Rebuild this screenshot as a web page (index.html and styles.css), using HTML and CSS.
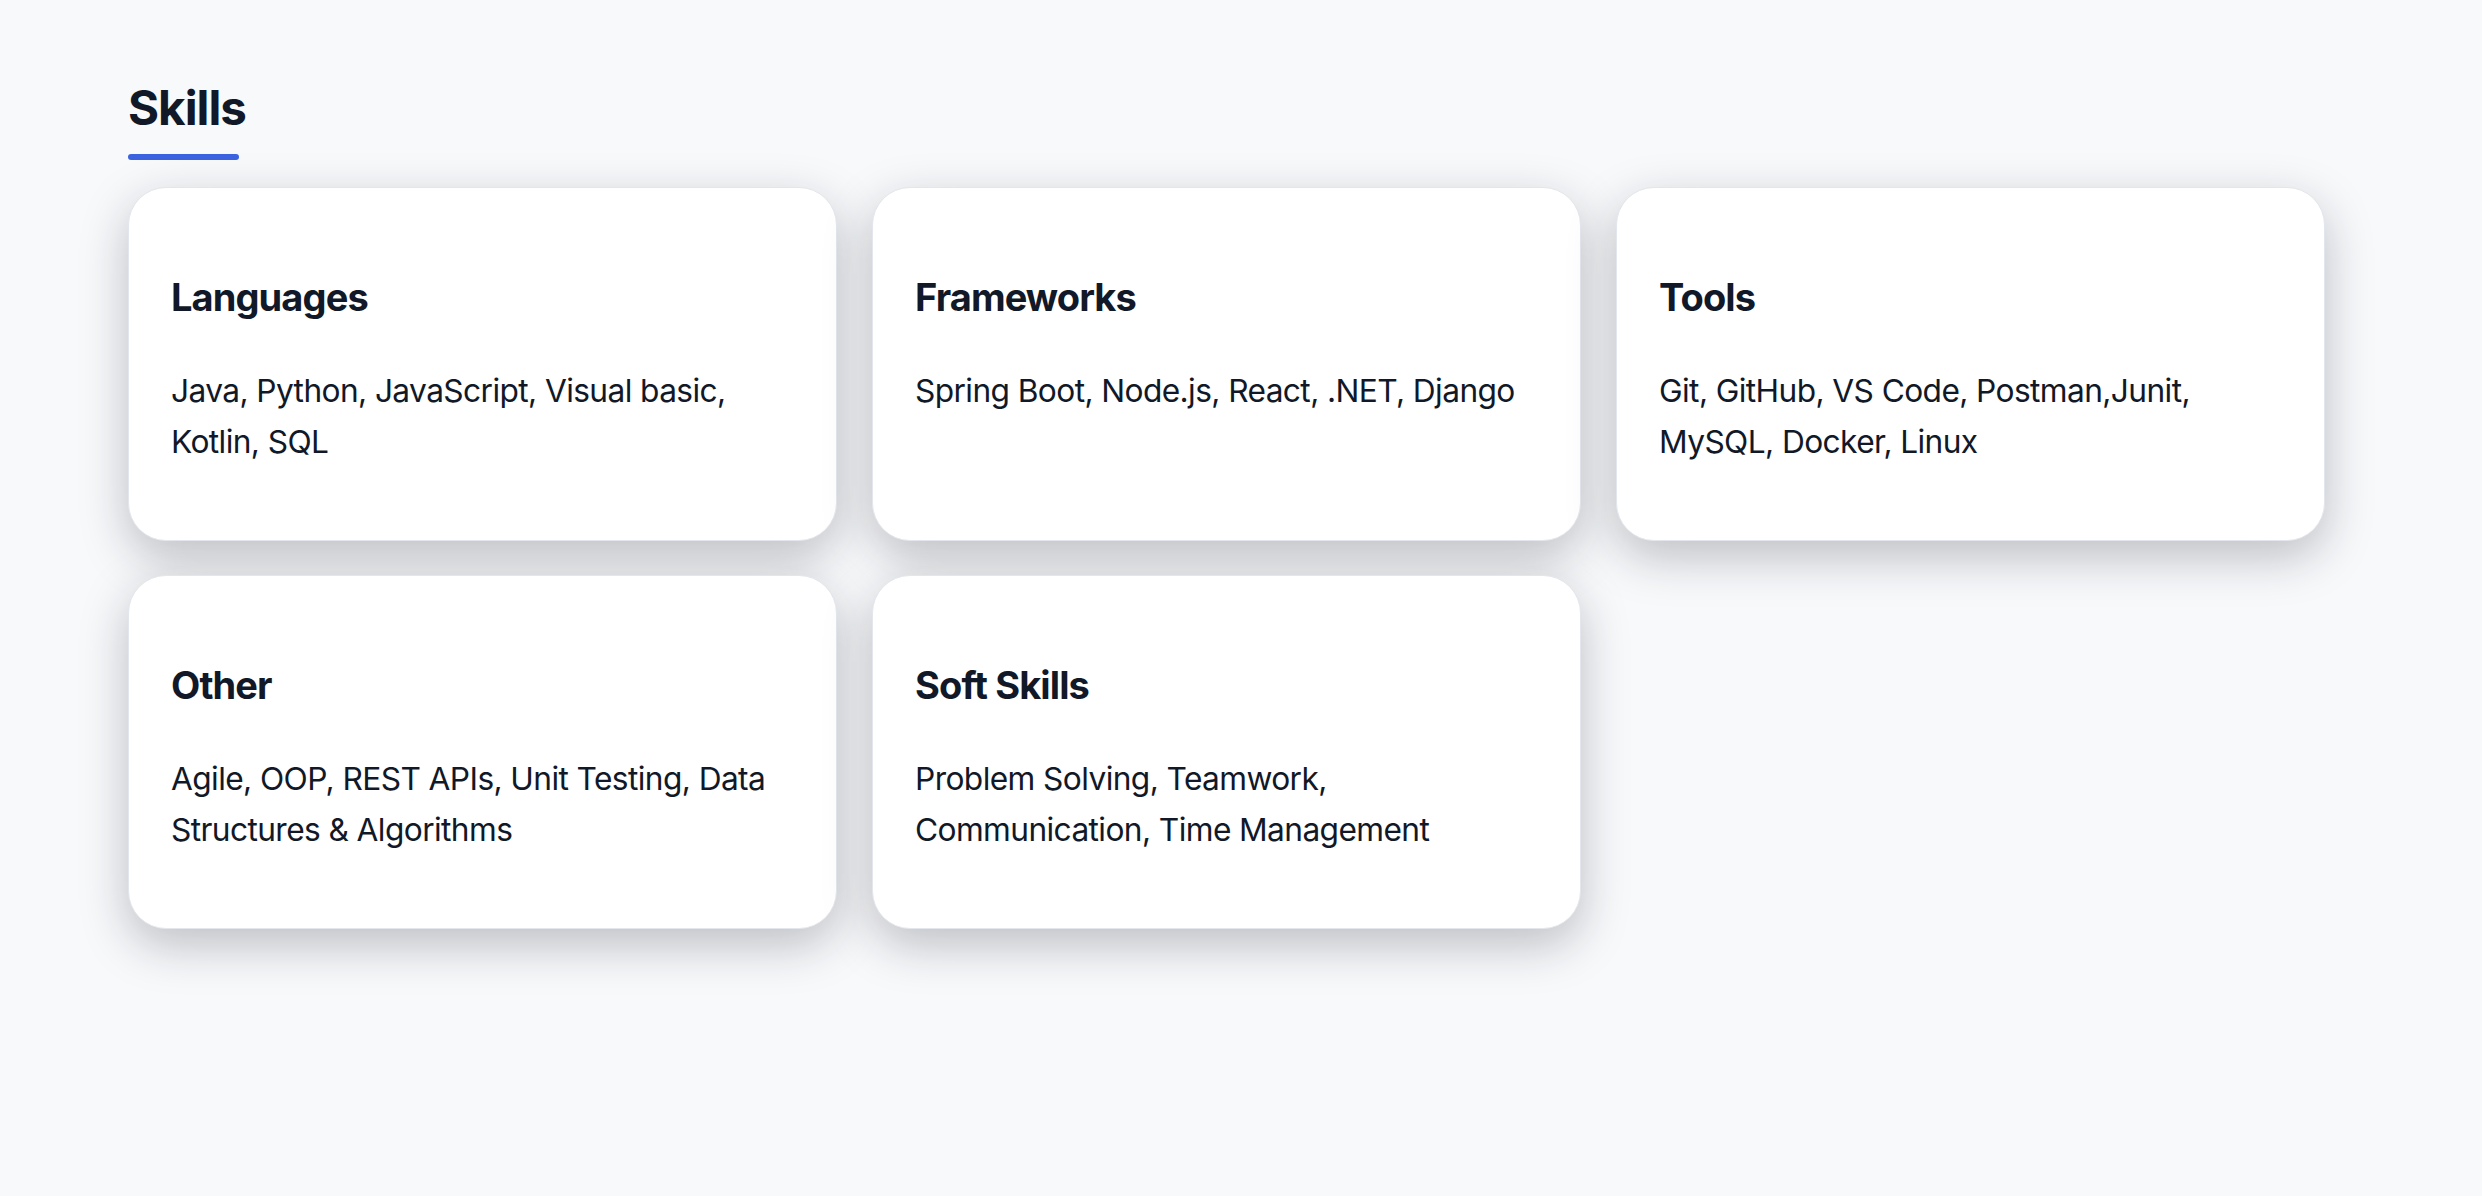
FILE: index.html
```html
<!DOCTYPE html>
<html lang="en">
<head>
<meta charset="utf-8">
<title>Skills</title>
<link rel="stylesheet" href="styles.css">
</head>
<body>
<section class="skills">
  <h2 class="skills-title">Skills</h2>
  <div class="skills-grid">
    <div class="skill-card">
      <h3 class="skill-card-title">Languages</h3>
      <p class="skill-card-text">Java, Python, JavaScript, Visual basic, Kotlin, SQL</p>
    </div>
    <div class="skill-card">
      <h3 class="skill-card-title">Frameworks</h3>
      <p class="skill-card-text">Spring Boot, Node.js, React, .NET, Django</p>
    </div>
    <div class="skill-card">
      <h3 class="skill-card-title">Tools</h3>
      <p class="skill-card-text">Git, GitHub, VS Code, Postman,Junit, MySQL, Docker, Linux</p>
    </div>
    <div class="skill-card">
      <h3 class="skill-card-title">Other</h3>
      <p class="skill-card-text">Agile, OOP, REST APIs, Unit Testing, Data Structures &amp; Algorithms</p>
    </div>
    <div class="skill-card">
      <h3 class="skill-card-title">Soft Skills</h3>
      <p class="skill-card-text">Problem Solving, Teamwork, Communication, Time Management</p>
    </div>
  </div>
</section>
</body>
</html>
```

FILE: styles.css
```css
html, body {
  margin: 0;
  padding: 0;
  background: #f8f9fb;
}

body {
  font-family: Inter, "Noto Sans", "Liberation Sans", sans-serif;
  color: #111827;
  min-height: 1196px;
}

.skills {
  padding: 79px 157px 0 128px;
}

.skills-title {
  margin: 0;
  font-size: 47.5px;
  font-weight: 700;
  line-height: 57.5px;
  color: #111827;
  display: inline-block;
  position: relative;
  padding-bottom: 23px;
  letter-spacing: -1px;
}

.skills-title::after {
  content: "";
  position: absolute;
  left: 0;
  bottom: 0;
  width: 111px;
  height: 6px;
  border-radius: 3px;
  background: #3b63e0;
}

.skills-grid {
  margin-top: 27px;
  display: grid;
  grid-template-columns: repeat(3, 1fr);
  gap: 34px 35px;
}

.skill-card {
  background: #ffffff;
  border: 1.5px solid #e3e6ec;
  border-radius: 38px;
  padding: 86.5px 42px 72.5px 42px;
  box-shadow: 0 16px 48px rgba(20, 24, 36, 0.26);
}

.skill-card-title {
  margin: 0;
  font-size: 38px;
  font-weight: 700;
  line-height: 46px;
  color: #111827;
  letter-spacing: -0.9px;
}

.skill-card-text {
  margin: 46px 0 0 0;
  font-size: 31.7px;
  font-weight: 400;
  line-height: 50.7px;
  color: #111827;
  letter-spacing: -0.6px;
}
```
